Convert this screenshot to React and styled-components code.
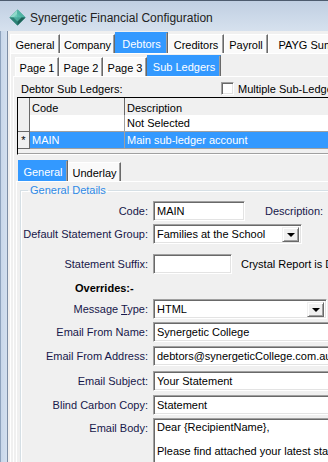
import React from 'react';
import styled, { createGlobalStyle } from 'styled-components';

const Global = createGlobalStyle`
  html, body { margin: 0; padding: 0; background: #f0f0f0; }
  body { font-family: "Liberation Sans", Arial, sans-serif; font-size: 11px; color: #000; }
  * { box-sizing: border-box; }
`;

const Window = styled.div`
  width: 328px;
  height: 462px;
  overflow: hidden;
  display: flex;
  flex-direction: column;
  background: #c9d9ec;
`;

const TitleBar = styled.div`
  height: 31px;
  flex: none;
  display: flex;
  align-items: center;
  gap: 4px;
  padding: 3px 0 0 9px;
  background: linear-gradient(#c0cfe2, #d6e1ee);
  border-top: 1px solid #4d5b6e;
  font-size: 12px;
  color: #222;
  white-space: nowrap;
`;

const Frame = styled.div`
  flex: 1;
  display: flex;
  min-height: 0;
`;

const SideBorder = styled.div`
  width: 8px;
  flex: none;
  background: linear-gradient(90deg, #8ea3bd 0, #8ea3bd 1px, #c8d7ea 1px, #d3e0ef 7px, #7d8ea5 7px);
`;

const Client = styled.div`
  flex: 1;
  min-width: 0;
  overflow: hidden;
  background: #f0f0f0;
  padding: 1px 0 0 2px;
`;

const Wide = styled.div`
  width: 760px;
`;

const TabStrip = styled.div`
  display: flex;
  align-items: flex-end;
  padding-left: ${p => p.$pl || 0}px;
  margin-top: ${p => p.$mt || 0}px;
`;

const Tab = styled.div`
  width: ${p => p.$w}px;
  height: ${p => (p.$active ? 21 : 19)}px;
  display: flex;
  align-items: center;
  justify-content: center;
  white-space: nowrap;
  overflow: hidden;
  background: ${p => (p.$active ? '#3399ff' : '#fafafa')};
  color: ${p => (p.$active ? '#fff' : '#000')};
  border-top: 1px solid ${p => (p.$active ? '#3399ff' : '#fff')};
  border-left: 1px solid ${p => (p.$active ? '#3399ff' : '#fff')};
  border-right: 1px solid #696969;
  box-shadow: inset -1px 0 #a0a0a0;
  padding-top: 1px;
`;

const Panel = styled.div`
  border-top: 1px solid #fff;
  border-left: 1px solid #fff;
  margin-left: ${p => p.$ml || 0}px;
  padding: ${p => p.$pad || '0'};
`;

const HeaderRow = styled.div`
  display: flex;
  align-items: center;
  height: 15px;
  margin-top: 4px;
  padding-left: 7px;
`;

const HeaderLabel = styled.div`
  width: 200px;
`;

const CheckBox = styled.div`
  width: 13px;
  height: 13px;
  background: #fff;
  border-top: 1px solid #a0a0a0;
  border-left: 1px solid #a0a0a0;
  border-right: 1px solid #fff;
  border-bottom: 1px solid #fff;
  box-shadow: inset 1px 1px #696969, inset -1px -1px #e3e3e3;
  margin-right: 4px;
`;

const Grid = styled.div`
  margin: 1px 0 0 3px;
  border-top: 1px solid #000;
  border-left: 1px solid #000;
  display: grid;
  grid-template-columns: 12px 95px 1fr;
  grid-auto-rows: 17px;
  padding-bottom: 5px;
  border-bottom: 1px solid #fff;
  box-shadow: inset 0 -1px #a0a0a0;
`;

const Cell = styled.div`
  display: flex;
  align-items: center;
  padding-left: ${p => (p.$ind ? 0 : 2)}px;
  justify-content: ${p => (p.$ind ? 'center' : 'flex-start')};
  background: ${p => (p.$sel ? '#3399ff' : p.$head || p.$ind ? '#f0f0f0' : '#fff')};
  color: ${p => (p.$sel ? '#fff' : '#000')};
  border-right: 1px solid ${p => (p.$head || p.$ind ? '#696969' : '#a0a0a0')};
  border-bottom: 1px solid ${p => (p.$head || p.$ind ? '#696969' : '#a0a0a0')};
  height: ${p => (p.$head ? 20 : 17)}px;
  white-space: nowrap;
`;

const Group = styled.fieldset`
  margin: 2px 0 0 3px;
  padding: 0;
  border: 1px solid #d5dfe5;
  box-shadow: 1px 1px #fff, inset 1px 1px #fff;
  min-width: 0;
`;

const Legend = styled.legend`
  color: #2e8ae6;
  padding: 0 2px;
  margin-left: 7px;
  line-height: 13px;
`;

const Row = styled.div`
  display: flex;
  align-items: ${p => (p.$top ? 'flex-start' : 'center')};
  margin-top: ${p => p.$mt || 0}px;
  white-space: nowrap;
`;

const Label = styled.div`
  width: 127px;
  margin-right: 5px;
  text-align: right;
  color: #17174a;
  padding-top: ${p => (p.$top ? 4 : 0)}px;
`;

const Sunken = styled.div`
  height: ${p => p.$h || 20}px;
  width: ${p => p.$w}px;
  background: #fff;
  border-top: 1px solid #a0a0a0;
  border-left: 1px solid #a0a0a0;
  border-right: 1px solid #fff;
  border-bottom: 1px solid #fff;
  box-shadow: inset 1px 1px #696969, inset -1px -1px #e3e3e3;
  padding: ${p => (p.$multi ? '2px 3px' : '0 3px')};
  display: flex;
  flex-direction: ${p => (p.$multi ? 'column' : 'row')};
  align-items: ${p => (p.$multi ? 'flex-start' : 'center')};
  line-height: ${p => (p.$multi ? '12px' : 'normal')};
`;

const Select = styled(Sunken)`
  padding: 2px 2px 2px 3px;
  justify-content: space-between;
`;

const SelectText = styled.span`
  flex: 1;
`;

const DropButton = styled.div`
  width: 17px;
  height: 15px;
  background: #f0f0f0;
  border-top: 1px solid #f0f0f0;
  border-left: 1px solid #f0f0f0;
  border-right: 1px solid #696969;
  border-bottom: 1px solid #696969;
  box-shadow: inset 1px 1px #fff, inset -1px -1px #a0a0a0;
  display: flex;
  align-items: center;
  justify-content: center;
`;

const Arrow = styled.div`
  width: 0;
  height: 0;
  border-left: 4px solid transparent;
  border-right: 4px solid transparent;
  border-top: 4px solid #000;
  margin-top: 1px;
`;

const SideText = styled.span`
  margin-left: ${p => p.$ml}px;
  color: ${p => p.$c || '#000'};
`;

const Overrides = styled.div`
  margin: 6px 0 0 54px;
  font-weight: bold;
  height: 16px;
  line-height: 16px;
`;

const BlankLine = styled.div`
  height: 12px;
`;

function Logo() {
  return (
    <svg width="17" height="17" viewBox="0 0 17 17">
      <polygon points="8.5,0.5 16.5,8.5 8.5,16.5 0.5,8.5" fill="#2f8f84" />
      <polygon points="8.5,0.5 0.5,8.5 8.5,8.5" fill="#8fd9c9" />
      <polygon points="8.5,0.5 16.5,8.5 8.5,8.5" fill="#4fb3a3" />
      <polygon points="0.5,8.5 8.5,16.5 8.5,8.5" fill="#2d8176" />
      <polygon points="16.5,8.5 8.5,16.5 8.5,8.5" fill="#1d6259" />
      <polygon points="8.5,4.5 12.5,8.5 8.5,12.5 4.5,8.5" fill="#5cc1b0" opacity="0.7" />
    </svg>
  );
}

function Dropdown({ w, value }) {
  return (
    <Select $w={w}>
      <SelectText>{value}</SelectText>
      <DropButton><Arrow /></DropButton>
    </Select>
  );
}

export default function App() {
  return (
    <>
      <Global />
      <Window>
        <TitleBar>
          <Logo />
          <span>Synergetic Financial Configuration</span>
        </TitleBar>
        <Frame>
          <SideBorder />
          <Client>
            <Wide>
              <TabStrip>
                <Tab $w={50}>General</Tab>
                <Tab $w={55}>Company</Tab>
                <Tab $w={53} $active>Debtors</Tab>
                <Tab $w={56}>Creditors</Tab>
                <Tab $w={44}>Payroll</Tab>
                <Tab $w={100}>PAYG Summary</Tab>
              </TabStrip>
              <Panel $pad="1px 0 0 2px">
                <TabStrip $pl={2}>
                  <Tab $w={44}>Page 1</Tab>
                  <Tab $w={44}>Page 2</Tab>
                  <Tab $w={44}>Page 3</Tab>
                  <Tab $w={74} $active>Sub Ledgers</Tab>
                </TabStrip>
                <Panel>
                  <HeaderRow>
                    <HeaderLabel>Debtor Sub Ledgers:</HeaderLabel>
                    <CheckBox />
                    <span>Multiple Sub-Ledgers</span>
                  </HeaderRow>
                  <Grid>
                    <Cell $head $ind />
                    <Cell $head>Code</Cell>
                    <Cell $head>Description</Cell>
                    <Cell $ind />
                    <Cell />
                    <Cell>Not Selected</Cell>
                    <Cell $ind>*</Cell>
                    <Cell $sel>MAIN</Cell>
                    <Cell $sel>Main sub-ledger account</Cell>
                  </Grid>
                  <TabStrip $pl={4} $mt={5}>
                    <Tab $w={50} $active>General</Tab>
                    <Tab $w={53}>Underlay</Tab>
                  </TabStrip>
                  <Panel $ml={2}>
                    <Group>
                      <Legend>General Details</Legend>
                      <Row $mt={4}>
                        <Label>Code:</Label>
                        <Sunken $w={92}>MAIN</Sunken>
                        <SideText $ml={20} $c="#17174a">Description:</SideText>
                      </Row>
                      <Row $mt={3}>
                        <Label>Default Statement Group:</Label>
                        <Dropdown w={149} value="Families at the School" />
                      </Row>
                      <Row $mt={10}>
                        <Label>Statement Suffix:</Label>
                        <Sunken $w={79} />
                        <SideText $ml={9}>Crystal Report is Default</SideText>
                      </Row>
                      <Overrides>Overrides:-</Overrides>
                      <Row $mt={3}>
                        <Label>Message <u>T</u>ype:</Label>
                        <Dropdown w={174} value="HTML" />
                      </Row>
                      <Row $mt={3}>
                        <Label>Email From Name:</Label>
                        <Sunken $w={400}>Synergetic College</Sunken>
                      </Row>
                      <Row $mt={4}>
                        <Label>Email From Address:</Label>
                        <Sunken $w={400}>debtors@synergeticCollege.com.au</Sunken>
                      </Row>
                      <Row $mt={5}>
                        <Label>Email Subject:</Label>
                        <Sunken $w={400}>Your Statement</Sunken>
                      </Row>
                      <Row $mt={4}>
                        <Label>Blind Carbon Copy:</Label>
                        <Sunken $w={400}>Statement</Sunken>
                      </Row>
                      <Row $mt={3} $top>
                        <Label $top>Email Body:</Label>
                        <Sunken $w={400} $h={120} $multi>
                          <div>Dear {'{RecipientName}'},</div>
                          <BlankLine />
                          <div>Please find attached your latest statement.</div>
                        </Sunken>
                      </Row>
                    </Group>
                  </Panel>
                </Panel>
              </Panel>
            </Wide>
          </Client>
        </Frame>
      </Window>
    </>
  );
}
